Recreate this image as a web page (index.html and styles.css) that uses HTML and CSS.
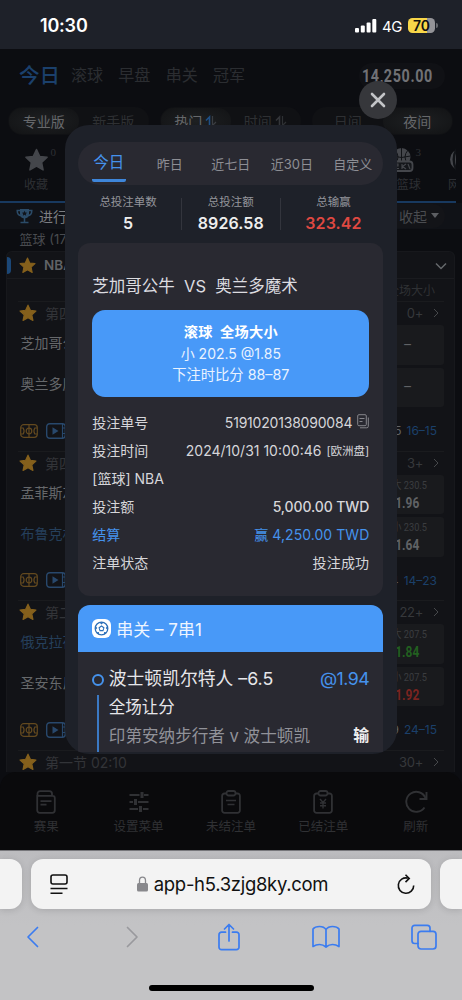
FILE: index.html
```
<!DOCTYPE html>
<html lang="zh-CN">
<head>
<meta charset="utf-8">
<meta name="viewport" content="width=device-width, initial-scale=1">
<title>今日注单</title>
<link rel="stylesheet" href="styles.css">
</head>
<body>
<svg class="defs" width="0" height="0">
  <symbol id="star" viewBox="0 0 24 24"><path d="M12 1.500l3.200 6.900 7.400.9-5.500 5.100 1.500 7.500L12 18.200l-6.600 3.700 1.500-7.500L1.400 9.300l7.400-.9z" fill="currentColor" stroke="currentColor" stroke-width="1.500" stroke-linejoin="round"/></symbol>
  <symbol id="chev" viewBox="0 0 8 12"><path d="M2 2l4 4-4 4" fill="none" stroke="currentColor" stroke-width="1"/></symbol>
  <symbol id="sort" viewBox="0 0 12 12"><path d="M1 5.500L4.500 2V11" fill="none" stroke="var(--up)" stroke-width="1.600"/><path d="M7.500 1v9.500L11 7" fill="none" stroke="currentColor" stroke-width="1.200"/></symbol>
  <symbol id="court" viewBox="0 0 18 14"><g fill="none" stroke="currentColor" stroke-width="1.200"><rect x=".7" y=".7" width="16.600" height="12.600" rx="3"/><path d="M9 1v12M1 4h2.200q1.800 3 0 6H1M17 4h-2.200q-1.800 3 0 6H17"/><circle cx="9" cy="7" r="2.800"/></g></symbol>
  <symbol id="video" viewBox="0 0 20 16"><rect x=".7" y=".7" width="18.600" height="14.600" rx="3" fill="none" stroke="currentColor" stroke-width="1.400"/><path d="M16.500 1v14M16.500 5H19M16.500 10.500H19" stroke="currentColor" stroke-width="1.200"/><path d="M6.500 4.300l6 3.700-6 3.700z" fill="currentColor"/></symbol>
  <symbol id="clip" viewBox="0 0 20 24"><g fill="none" stroke="currentColor" stroke-width="1.800"><path d="M5.500 3.500H3.500a2.400 2.400 0 0 0-2.400 2.400v14.500a2.400 2.400 0 0 0 2.400 2.400h13a2.400 2.400 0 0 0 2.400-2.400V5.900a2.400 2.400 0 0 0-2.400-2.400h-2"/><rect x="5.500" y="1" width="9" height="4.500" rx="2"/></g></symbol>
</svg>

<div class="phone">
  <header class="status">
    <span class="clock">10:30</span>
    <div class="status-right">
      <svg width="22" height="14" viewBox="0 0 22 14" fill="#fff"><rect x="0" y="9" width="4" height="4.500" rx="1"/><rect x="5.800" y="6.500" width="4" height="7" rx="1"/><rect x="11.600" y="3.500" width="4" height="10" rx="1"/><rect x="17.300" y="0" width="4" height="13.500" rx="1"/></svg>
      <span class="net">4G</span>
      <div class="battery"><span>70</span></div><i class="nub"></i>
    </div>
  </header>

  <main class="app">
    <nav class="nav">
      <b>今日</b><span>滚球</span><span>早盘</span><span>串关</span><span>冠军</span>
      <div class="balance"><em>14,250.00</em></div>
    </nav>
    <div class="filters">
      <div class="seg"><span class="on">专业版</span><span>新手版</span></div>
      <div class="seg"><span class="on up">热门<svg width="12" height="12"><use href="#sort"/></svg></span><span>时间<svg width="12" height="12"><use href="#sort"/></svg></span></div>
      <div class="seg"><span>日间</span><span class="on">夜间</span></div>
    </div>
    <div class="sports">
      <div class="sport fav"><svg width="25" height="24"><use href="#star"/></svg><sup>0</sup><span>收藏</span></div>
      <div class="sport">
        <svg width="25" height="25" viewBox="0 0 25 25"><circle cx="12.500" cy="10" r="9" fill="#44464b"/><path d="M12.500 1v18M3.500 9q9 3 18 0M6 3q6 7 0 14M19 3q-6 7 0 14" fill="none" stroke="#111317" stroke-width="1"/><rect x="1.500" y="14.500" width="22" height="9.500" rx="3" fill="#15171b" stroke="#44464b" stroke-width="1.800"/><path d="M5 17h4v2H5.500v2.500H10M13 17v5M17 17l-3.500 2.500L17 22M19 17l2 5" fill="none" stroke="#44464b" stroke-width="1.200"/></svg>
        <sup>3</sup><span>2K篮球</span></div>
      <div class="sport edge">
        <svg width="25" height="25" viewBox="0 0 25 25"><circle cx="12.500" cy="12.500" r="10.500" fill="#44464b"/><path d="M8.500 2q-5.500 10.500 0 21" fill="none" stroke="#111317" stroke-width="2.500"/></svg>
        <span>网球</span></div>
    </div>
    <div class="live">
      <svg width="17" height="16" viewBox="0 0 17 16"><path d="M4 1h9v5q0 4-4.500 4.500Q4 10 4 6z" fill="#2b4b68"/><path d="M4 2.500H1.200q0 5 4 5.200M13 2.500h2.800q0 5-4 5.200M8.500 10v4M4.500 14.500h8" fill="none" stroke="#2b4b68" stroke-width="1.500"/><path d="M8.500 2.800l.8 1.700 1.800.2-1.300 1.200.4 1.800-1.700-.9-1.700.9.400-1.800-1.300-1.200 1.800-.2z" fill="#10131a"/></svg>
      <span>进行中</span>
      <div class="fold">收起<i></i></div>
    </div>
    <div class="count">篮球 (17)</div>
    <section class="league">
      <div class="league-head"><i></i><svg width="17" height="17"><use href="#star"/></svg><span>NBA</span><svg class="down" width="12" height="8" viewBox="0 0 12 8"><path d="M1 1.500l5 5 5-5" fill="none" stroke="#66686c" stroke-width="1.500"/></svg></div>
      <div class="cols">全场大小</div>
      <article class="match">
        <div class="period"><svg width="18" height="18"><use href="#star"/></svg><span>第四节</span><em>0+</em><svg width="8" height="12"><use href="#chev"/></svg></div>
        <div class="body"><div class="teams"><span>芝加哥公牛</span><span>奥兰多魔术</span></div><div class="odds"><div>–</div><div>–</div></div></div>
        <div class="foot"><svg class="court" width="18" height="14"><use href="#court"/></svg><svg class="video" width="20" height="16"><use href="#video"/></svg><span>15</span><b>16–15</b></div>
      </article>
      <article class="match">
        <div class="period"><svg width="18" height="18"><use href="#star"/></svg><span>第四节</span><em>3+</em><svg width="8" height="12"><use href="#chev"/></svg></div>
        <div class="body"><div class="teams"><span>孟菲斯灰熊</span><span class="bl">布鲁克林篮网</span></div><div class="odds"><div><small>大 230.5</small><b>1.96</b></div><div><small>小 230.5</small><b>1.64</b></div></div></div>
        <div class="foot"><svg class="court" width="18" height="14"><use href="#court"/></svg><svg class="video" width="20" height="16"><use href="#video"/></svg><span>24</span><b>14–23</b></div>
      </article>
      <article class="match">
        <div class="period"><svg width="18" height="18"><use href="#star"/></svg><span>第二节</span><em>22+</em><svg width="8" height="12"><use href="#chev"/></svg></div>
        <div class="body"><div class="teams"><span class="bl">俄克拉荷马雷霆</span><span>圣安东尼奥马刺</span></div><div class="odds"><div><small>大 207.5</small><b class="g">1.84</b></div><div><small>小 207.5</small><b class="r">1.92</b></div></div></div>
        <div class="foot"><svg class="court" width="18" height="14"><use href="#court"/></svg><svg class="video" width="20" height="16"><use href="#video"/></svg><span>39</span><b>24–15</b></div>
      </article>
      <article class="match">
        <div class="period"><svg width="18" height="18"><use href="#star"/></svg><span>第一节 02:10</span><em>30+</em><svg width="8" height="12"><use href="#chev"/></svg></div>
      </article>
    </section>
    <footer class="tabbar">
      <div><svg width="20" height="24" viewBox="0 0 20 24" fill="none" stroke="currentColor" stroke-width="1.800"><path d="M1.500 5.500V3.800A2.600 2.600 0 0 1 4.100 1.200h9.300a2.600 2.600 0 0 1 2.600 2.600v1.700M1.200 5.800h15.300a2.300 2.300 0 0 1 2.300 2.300v12.200a2.500 2.500 0 0 1-2.500 2.500H3.700a2.500 2.500 0 0 1-2.500-2.500zM4.500 11.200h11M4.500 14.700h6"/></svg><span>赛果</span></div>
      <div><svg width="20" height="24" viewBox="0 0 20 24" fill="none" stroke="currentColor" stroke-width="1.800"><path d="M.5 5h10M15 5h4.500M.5 12H4M9 12h10.500M.5 19H9M14 19h5.500"/><path d="M13 2v6M6.500 9v6M11.500 16v6" stroke-width="3"/></svg><span>设置菜单</span></div>
      <div><svg width="20" height="24" viewBox="0 0 20 24"><use href="#clip"/><path d="M5 10.500h10M6.500 14.500h7" stroke="currentColor" stroke-width="1.600"/></svg><span>未结注单</span></div>
      <div><svg width="20" height="24" viewBox="0 0 20 24"><use href="#clip"/><path d="M7 9l3 3.500L13 9M10 12v6.500M7 13h6M7 15.800h6" fill="none" stroke="currentColor" stroke-width="1.400"/></svg><span>已结注单</span></div>
      <div><svg width="24" height="24" viewBox="0 0 24 24" fill="none" stroke="currentColor" stroke-width="1.900"><path d="M21.500 8A10 10 0 1 0 20.500 17.500"/><path d="M22.500 2v7H15.500"/></svg><span>刷新</span></div>
    </footer>
  </main>

  <footer class="safari">
    <div class="tabs">
      <i class="side left"></i>
      <div class="address">
        <svg width="18" height="21" viewBox="0 0 18 21" fill="none" stroke="#111" stroke-width="1.600"><rect x="1" y="1" width="16" height="9" rx="2"/><path d="M.5 14.500h17M.5 19.300h12"/></svg>
        <div class="url"><svg width="11" height="16" viewBox="0 0 11 16"><rect x="0" y="7" width="11" height="8.500" rx="1.500" fill="#88888c"/><path d="M2.500 8V4.500a3 3.300 0 0 1 6 0V8" fill="none" stroke="#88888c" stroke-width="1.300"/></svg><span>app-h5.3zjg8ky.com</span></div>
        <svg width="18" height="21" viewBox="0 0 18 21" fill="none" stroke="#111" stroke-width="1.600"><path d="M10.800 4.100A7.700 7.700 0 1 0 16.700 11.500"/><path d="M8.500 .8l3.700 3.600-3.700 3.700"/></svg>
      </div>
      <i class="side right"></i>
    </div>
    <div class="tools">
      <svg width="13" height="22" viewBox="0 0 13 22"><path d="M11.500 1.500L2 11l9.500 9.500"/></svg>
      <svg class="dis" width="13" height="22" viewBox="0 0 13 22"><path d="M1.500 1.500L11 11l-9.500 9.500"/></svg>
      <svg class="share" width="22" height="28" viewBox="0 0 22 28"><path d="M7.500 9.200H3.500A2.500 2.500 0 0 0 1 11.700v12.500a2.500 2.500 0 0 0 2.500 2.500h15a2.500 2.500 0 0 0 2.500-2.500V11.700a2.500 2.500 0 0 0-2.500-2.500h-4M11 18V2M6.500 6L11 1.500 15.500 6"/></svg>
      <svg class="book" width="28" height="24" viewBox="0 0 28 24"><path d="M14 4.500Q12 1.500 7.500 1.500T1 4V21.500q3-2 6.500-2t6.500 2.500q3-2.500 6.500-2.500t6.500 2V4Q25 1.500 20.500 1.500T14 4.500V22"/></svg>
      <svg class="pages" width="26" height="26" viewBox="0 0 26 26"><rect x="7" y="7.300" width="18" height="17.700" rx="3"/><path d="M7 19.500H3.700A2.700 2.700 0 0 1 1 16.800V4A2.700 2.700 0 0 1 3.700 1.300h12.600A2.700 2.700 0 0 1 19 4v3.300"/></svg>
    </div>
    <i class="home"></i>
  </footer>

  <section class="modal">
    <div class="range"><b>今日</b><span>昨日</span><span>近七日</span><span>近30日</span><span>自定义</span></div>
    <div class="stats">
      <div><span>总投注单数</span><b>5</b></div>
      <div><span>总投注额</span><b>8926.58</b></div>
      <div><span>总输赢</span><b class="loss">323.42</b></div>
    </div>
    <div class="card">
      <h3>芝加哥公牛&nbsp; VS &nbsp;奥兰多魔术</h3>
      <div class="pick"><b>滚球&nbsp; 全场大小</b><span>小 202.5 @1.85</span><span>下注时比分 88–87</span></div>
      <dl>
        <div><dt>投注单号</dt><dd>5191020138090084<svg class="copy" width="12" height="15" viewBox="0 0 12 15" fill="none" stroke="#85858b"><rect x=".7" y=".7" width="8.600" height="11" rx="1.200"/><path d="M11.300 3.500v8.800a1.500 1.500 0 0 1-1.500 1.500H3M2.500 4.500h5M2.500 7.500h3"/></svg></dd></div>
        <div><dt>投注时间</dt><dd class="time">2024/10/31 10:00:46 <small>[欧洲盘]</small></dd></div>
        <div><dt>[篮球] NBA</dt></div>
        <div><dt>投注额</dt><dd class="amt">5,000.00 TWD</dd></div>
        <div class="win"><dt>结算</dt><dd>赢 4,250.00 TWD</dd></div>
        <div><dt>注单状态</dt><dd class="ok">投注成功</dd></div>
      </dl>
    </div>
    <div class="card parlay">
      <div class="parlay-head"><svg width="19" height="19" viewBox="0 0 19 19"><rect width="19" height="19" rx="6" fill="#fff"/><circle cx="9.500" cy="9.500" r="6.300" fill="none" stroke="#2c6fb8" stroke-width="1.300"/><path d="M9.500 7l2.400 1.800-.9 2.800H8l-.9-2.800z" fill="none" stroke="#2c6fb8" stroke-width="1.100"/><path d="M7.200 3.300h4.600L9.500 5.500zM15.700 6.800v4.400L13.700 9zM3.300 6.800v4.400L5.300 9zM12 15.500l2.500-2-2.500-.5zM7 15.500l-2.500-2 2.500-.5z" fill="#2c6fb8"/></svg><span>串关 – 7串1</span></div>
      <div class="legs">
        <div class="rail"><i></i><s></s></div>
        <div class="leg">
          <div class="l1"><span>波士顿凯尔特人 –6.5</span><em>@1.94</em></div>
          <div class="l2">全场让分</div>
          <div class="l3"><span>印第安纳步行者 v 波士顿凯</span><b>输</b></div>
        </div>
      </div>
    </div>
  </section>
  <button class="close" aria-label="关闭"><svg width="16" height="16" viewBox="0 0 16 16"><path d="M2 2l12 12M14 2L2 14" stroke="#c3c4c7" stroke-width="2.600" stroke-linecap="round"/></svg></button>
</div>
</body>
</html>
```
FILE: styles.css
```
* { box-sizing: border-box; }
body { margin: 0; background: #0c0d11; font-family: Inter, "Noto Sans CJK SC", sans-serif; }
i, em { font-style: normal; }
.defs { position: absolute; }
svg { display: block; flex: none; }
.phone { position: relative; width: 462px; height: 1000px; overflow: hidden; display: flex; flex-direction: column; white-space: nowrap; }

/* status bar */
.status { height: 49px; background: #1e2129; padding: 2px 24px 0 40px; display: flex; align-items: center; justify-content: space-between; color: #fff; }
.clock { font-size: 18px; font-weight: 600; letter-spacing: -.2px; }
.status-right { display: flex; align-items: center; }
.net { font-size: 15px; letter-spacing: -.4px; margin: 2px 6px 0 5px; }
.battery { width: 27px; height: 15px; border-radius: 4.500px; background: linear-gradient(90deg, #f8d648 70%, #949498 70%); color: #111; font-size: 14px; font-weight: 600; line-height: 15px; text-align: center; }
.nub { width: 2px; height: 5px; margin-left: 1px; background: #66686d; border-radius: 0 2px 2px 0; }

/* dimmed page */
.app { height: 801px; background: #0c0d11; display: flex; flex-direction: column; color: #44464a; overflow: hidden; }
.nav { height: 51px; display: flex; align-items: center; padding: 0 17px 1px 19px; font-size: 16px; }
.nav b { font-size: 20.500px; font-weight: 500; color: #1b406c; margin-right: 11px; }
.nav span { color: #2b2d31; margin-right: 15.300px; }
.balance { margin: 3px 0 0 auto; width: 86px; height: 26px; border-radius: 13px; background: #101115; padding-left: 3px; color: #707175; font: 700 17.500px/27px Roboto, sans-serif; }
.balance em { display: inline-block; transform: scaleX(.82); transform-origin: 0 50%; letter-spacing: .75px; }
.filters { height: 42px; padding: 7px 9px 7px 8px; display: flex; justify-content: space-between; }
.seg { width: 141px; height: 28px; border-radius: 14px; background: #101114; display: flex; padding: 1px; font-size: 14px; color: #2e3033; }
.seg span { --up: #333539; flex: 1; display: flex; align-items: center; justify-content: center; gap: 3px; padding-bottom: 1px; }
.seg .on { background: radial-gradient(ellipse at center, #1e2022, #131416 90%); border-radius: 13px; color: #66686b; }
.seg .up { --up: #1e4f85; }
.seg .on svg { color: #3a3d42; }
.sports { height: 61px; border-bottom: 2px solid #18395f; display: flex; width: 456px; overflow: hidden; padding-top: 4px; font-size: 12px; color: #2e3034; }
.sport { flex: none; width: 50px; display: grid; grid-template-columns: 1fr 25px 1fr; grid-template-rows: 27px 23px; align-items: center; }
.sport svg { grid-column: 2; grid-row: 1; color: #44464b; }
.sport sup { grid-column: 3; grid-row: 1; align-self: start; margin: -1px 0 0 2px; font: 11px/14px "Liberation Serif", serif; }
.sport span { grid-column: 1 / 4; text-align: center; line-height: 22px; }
.fav { margin-left: 11px; margin-right: 312px; }
.sport.fav + .sport { margin-left: 3px; }
.sport.edge { margin-left: 9px; }
.live { height: 26px; background: #101217; display: flex; align-items: center; padding: 0 17px 1px 16px; font-size: 14px; color: #7c7e82; }
.live span { margin-left: 6px; }
.fold { margin-left: auto; width: 66px; height: 24px; border-radius: 12px; background: #131418; display: flex; align-items: center; justify-content: flex-end; padding-right: 6px; gap: 4px; color: #4a4c50; }
.fold i { border: 4px solid transparent; border-top: 5px solid #5c5e62; border-bottom: 0; }
.count { height: 22px; line-height: 21px; padding-left: 19.500px; font-size: 13px; color: #494b4f; }
.league { width: 449px; margin-left: 6px; background: #121317; border-radius: 6px 6px 0 0; border: 1px solid #17181c; border-bottom: 0; height: 521px; overflow: hidden; }
.league-head { height: 27px; border-bottom: 1px solid #1a1b1f; display: flex; align-items: center; color: #85601c; }
.league-head i { width: 4px; height: 17px; border-radius: 0 4px 4px 0; background: #1b4777; }
.league-head svg { margin-left: 8px; }
.league-head span { margin-left: 8px; font-size: 13.500px; font-weight: 600; color: #606266; }
.league-head .down { margin: 2px 7px 0 auto; }
.cols { height: 22px; line-height: 23px; font-size: 12px; color: #2f3134; text-align: right; padding-right: 19px; }
.match { height: 149.500px; margin: 0 10px 0 11px; border-top: 1px solid #1a1b1e; }
.period { height: 22px; display: flex; align-items: center; color: #85601c; font-size: 14px; padding-right: 4px; }
.period svg:first-child { margin-left: 1px; }
.period span { margin-left: 8px; color: #323438; }
.period em { margin-left: auto; margin-right: 9px; font-size: 13px; letter-spacing: -.3px; color: #36383b; }
.period em + svg { color: #46484b; }
.body { height: 83px; padding-top: 1px; display: flex; justify-content: space-between; }
.teams { margin-left: 2.500px; font-size: 14px; color: #66686b; }
.teams span { display: block; height: 41px; line-height: 36px; }
.teams .bl { color: #253f5b; }
.odds { width: 73px; display: flex; flex-direction: column; gap: 3px; }
.odds div { flex: 1; border-radius: 3px; background: #191a1d; display: flex; flex-direction: column; align-items: center; justify-content: center; color: #606265; font-family: Roboto, "Noto Sans CJK SC", sans-serif; font-size: 14px; }
.odds small { font-size: 11.500px; line-height: 17px; margin-left: 5px; color: #3b3d40; transform: scaleX(.8); }
.odds b { font-size: 14px; line-height: 18px; letter-spacing: .1px; transform: scaleX(.85); }
.odds .g { color: #226020; }
.odds .r { color: #7b2420; }
.foot { height: 43.500px; display: flex; align-items: center; padding: 4px 7px 0 2px; font-size: 12px; }
.court { color: #63491f; }
.video { color: #28486c; margin-left: 8px; }
.foot span { margin-left: auto; color: #606265; }
.foot b { margin-left: 5px; font-weight: 400; color: #1b406a; }
.tabbar { flex: 1; background: #0a0a0c; border-radius: 16px 16px 0 0; display: flex; justify-content: space-between; color: #303134; font-size: 12.500px; }
.tabbar div { width: 92.400px; display: flex; flex-direction: column; align-items: center; padding-top: 18px; }
.tabbar span { line-height: 18px; margin-top: 4px; }

/* browser chrome */
.safari { height: 150px; background: linear-gradient(#bcbcbf, #c3c3c5 50%); border-top: 1px solid #77777b; display: flex; flex-direction: column; align-items: center; }
.tabs { display: flex; gap: 9px; width: 462px; padding-top: 8px; }
.side, .address { height: 50px; background: #f3f3f3; box-shadow: 0 1px 7px rgba(0,0,0,.14); }
.side { width: 22px; }
.left { border-radius: 0 12px 12px 0; }
.right { border-radius: 12px 0 0 12px; }
.address { width: 400px; border-radius: 12px; display: flex; align-items: center; justify-content: space-between; padding: 0 16px 0 19px; }
.url { display: flex; align-items: center; gap: 6px; font-size: 18.500px; letter-spacing: -.3px; color: #111; }
.tools { width: 462px; height: 56px; padding-left: 26px; display: flex; align-items: center; }
.tools svg { fill: none; stroke: #3b7cf0; stroke-width: 1.700; stroke-linejoin: round; stroke-linecap: round; }
.tools .dis { stroke: #99999d; margin-left: 87px; }
.tools .share { margin-left: 79px; }
.tools .book { margin-left: 72px; }
.tools .pages { margin-left: 71px; }
.home { width: 165px; height: 6px; border-radius: 3px; background: #000; margin-top: 20px; }

/* bet history dialog */
.modal { position: absolute; left: 65px; top: 125px; width: 332px; height: 628.500px; border-radius: 24px; background: #1e2129; padding: 17px 13.700px 2px 13.300px; overflow: hidden; display: flex; flex-direction: column; color: #d6d6da; }
.range { height: 43px; border-radius: 22px; background: #292931; display: flex; align-items: center; font-size: 13px; color: #8d8e94; justify-content: center; flex: none; }
.range span { width: 61px; text-align: center; }
.range b { width: 34px; margin: 0 13.500px; text-align: center; font-size: 15.500px; font-weight: 400; color: #4592ec; height: 37px; line-height: 35px; border-bottom: 3px solid #3e86da; border-radius: 2px; }
.stats { height: 58px; display: flex; padding-top: 13px; margin: 0 -3px; flex: none; }
.stats div { flex: 106; height: 32px; text-align: center; display: flex; flex-direction: column; }
.stats div:nth-child(2) { flex: 98; }
.stats div + div { border-left: 1px solid #33353d; }
.stats span { font-size: 11.500px; line-height: 9px; color: #94959b; }
.stats b { font-size: 16px; font-weight: 600; line-height: 33px; letter-spacing: .1px; color: #eee; }
.stats .loss { color: #df4841; }
.card { background: #292931; border-radius: 12px; flex: none; }
.card:not(.parlay) { height: 353px; padding: 28px 14px 0; }
h3 { margin: 0 0 9px; font-size: 16.500px; font-weight: 400; line-height: 30px; color: #dcdce0; }
.pick { height: 87px; border-radius: 13px; background: #4899f8; color: #eaf3ff; display: flex; flex-direction: column; align-items: center; justify-content: center; font-size: 14px; line-height: 21.500px; }
.pick span:last-child { font-size: 14.300px; }
.pick b { color: #fff; font-weight: 700; letter-spacing: .3px; font-size: 14.200px; }
dl { margin: 12px 0 0; font-size: 14px; }
dl div { display: flex; justify-content: space-between; height: 28px; line-height: 28px; }
dd { margin: 0; display: flex; align-items: center; gap: 5px; letter-spacing: -.2px; }
dd small { font-size: 11.500px; letter-spacing: 0; }
.time { letter-spacing: 0; }
.copy { margin-top: -4px; }
.amt { font-weight: 500; letter-spacing: -.1px; }
.win { color: #4592ec; }
.win dd { letter-spacing: .05px; }
.ok { letter-spacing: .2px; }
.parlay { margin-top: 9px; height: 146.500px; overflow: hidden; border-radius: 12px 12px 0 0; }
.parlay-head { height: 47px; background: #4899f8; display: flex; align-items: center; gap: 5px; padding: 0 0 1px 14px; font-size: 17px; color: #eef5ff; }
.legs { display: flex; padding: 12px 14px 0; gap: 4.500px; }
.rail { width: 12px; padding-top: 10px; display: flex; flex-direction: column; align-items: center; gap: 9px; }
.rail i { width: 12px; height: 12px; border: 2.500px solid #4592ec; border-radius: 50%; flex: none; }
.rail s { width: 2px; height: 70px; background: #3b79c4; }
.leg { flex: 1; }
.l1, .l3 { display: flex; justify-content: space-between; }
.l1 { font-size: 17.800px; line-height: 29px; color: #e6e6ea; }
.l1 em { color: #4592ec; letter-spacing: -.5px; }
.l2 { font-size: 16.500px; line-height: 29px; color: #e6e6ea; }
.l3 { font-size: 16.600px; line-height: 29px; color: #919299; }
.l3 b { font-size: 16px; line-height: 26px; color: #eee; }
.close { position: absolute; left: 359px; top: 81px; width: 38px; height: 38px; padding: 0; border: 0; border-radius: 50%; background: #36373b; display: flex; align-items: center; justify-content: center; }
```
